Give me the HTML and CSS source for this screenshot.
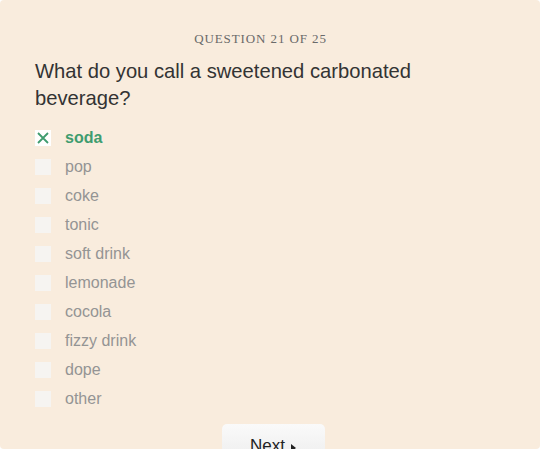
FILE: index.html
```html
<!DOCTYPE html>
<html>
<head>
<meta charset="utf-8">
<link rel="stylesheet" href="styles.css">
</head>
<body>
<div class="card">
  <div class="counter">QUESTION 21 OF 25</div>
  <h1 class="question">What do you call a sweetened carbonated beverage?</h1>
  <ul class="options">
    <li class="option selected"><span class="box"><svg width="12" height="12" viewBox="0 0 12 12"><path d="M1 1 L11 11 M11 1 L1 11" stroke="#3f9c6f" stroke-width="1.8" fill="none"/></svg></span><span class="label">soda</span></li>
    <li class="option"><span class="box"></span><span class="label">pop</span></li>
    <li class="option"><span class="box"></span><span class="label">coke</span></li>
    <li class="option"><span class="box"></span><span class="label">tonic</span></li>
    <li class="option"><span class="box"></span><span class="label">soft drink</span></li>
    <li class="option"><span class="box"></span><span class="label">lemonade</span></li>
    <li class="option"><span class="box"></span><span class="label">cocola</span></li>
    <li class="option"><span class="box"></span><span class="label">fizzy drink</span></li>
    <li class="option"><span class="box"></span><span class="label">dope</span></li>
    <li class="option"><span class="box"></span><span class="label">other</span></li>
  </ul>
  <div class="actions">
    <button class="next">Next <span class="tri"></span></button>
  </div>
</div>
</body>
</html>
```
FILE: styles.css
```css
html, body {
  margin: 0;
  padding: 0;
  background: #ffffff;
}
.card {
  box-sizing: border-box;
  width: 540px;
  height: 449px;
  overflow: hidden;
  background: #f9ecdd;
  border-radius: 4px;
  padding: 31px 35px 0 35px;
}
.counter {
  font-family: "Liberation Serif", "DejaVu Serif", serif;
  font-size: 13px;
  letter-spacing: 0.9px;
  color: #6a6a6a;
  text-align: center;
  padding-right: 19px;
  line-height: 16px;
}
.question {
  margin: 11px 0 0 0;
  font-family: "Liberation Sans", Arial, sans-serif;
  font-weight: normal;
  font-size: 20.2px;
  line-height: 27px;
  color: #333333;
  max-width: 420px;
}
.options {
  list-style: none;
  margin: 11px 0 0 0;
  padding: 0;
}
.option {
  display: flex;
  align-items: center;
  height: 29px;
  font-family: "Liberation Sans", Arial, sans-serif;
  font-size: 16px;
  color: #949494;
}
.box {
  width: 16px;
  height: 16px;
  background: #f6f4f1;
  margin-right: 14px;
  display: flex;
  align-items: center;
  justify-content: center;
}
.selected .box {
  background: #ffffff;
}
.selected .label {
  color: #3f9c6f;
  font-weight: bold;
}
.actions {
  display: flex;
  justify-content: center;
  margin-top: 11px;
  padding-left: 6px;
}
.next {
  width: 103px;
  height: 40px;
  border: none;
  border-radius: 5px;
  background: linear-gradient(#fafafa, #ececec);
  font-family: "Liberation Sans", Arial, sans-serif;
  font-size: 17px;
  color: #222222;
  padding: 0;
  display: flex;
  align-items: flex-start;
  justify-content: center;
  padding-top: 12px;
  gap: 6px;
}
.tri {
  width: 0;
  height: 0;
  border-left: 5px solid #222;
  border-top: 4px solid transparent;
  border-bottom: 4px solid transparent;
  margin-top: 8px;
}
```
